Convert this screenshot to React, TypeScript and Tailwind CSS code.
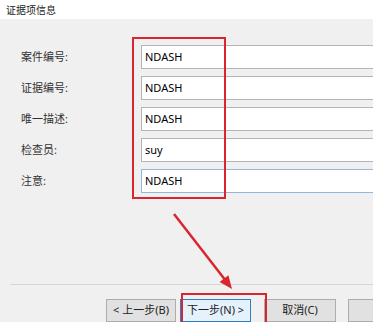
import React from "react";

const fields = [
  { label: "案件编号:", value: "NDASH" },
  { label: "证据编号:", value: "NDASH" },
  { label: "唯一描述:", value: "NDASH" },
  { label: "检查员:", value: "suy" },
  { label: "注意:", value: "NDASH", focused: true },
];

const font = { fontFamily: '"Noto Sans", "Noto Sans CJK SC", sans-serif' };

export default function App() {
  return (
    <div
      className="relative w-[373px] h-[322px] overflow-hidden bg-[#f0f0f0] text-[#1a1a1a]"
      style={font}
    >
      {/* header */}
      <div className="h-[19px] bg-white flex items-center pl-[6px]">
        <span className="text-[10px] leading-none text-[#222]">证据项信息</span>
      </div>

      {/* form rows */}
      <div className="flex flex-col gap-[7px] pt-[26px]">
        {fields.map((f) => (
          <div key={f.label} className="flex items-center h-[24px] w-[400px]">
            <div className="w-[141px] pl-[21px] text-[11px] text-[#333]">{f.label}</div>
            <div
              className={
                "h-[24px] w-[250px] bg-white border flex items-center pl-[3px] text-[11px] text-black " +
                (f.focused ? "border-[#8fb8db]" : "border-[#b4b4b4]")
              }
            >
              {f.value}
            </div>
          </div>
        ))}
      </div>

      {/* separator */}
      <div className="mt-[91px] ml-[10px] h-px bg-[#d6d6d6]" />

      {/* buttons */}
      <div className="flex mt-[14px] pl-[106px] text-[11px] w-[420px]">
        <button className="h-[23px] w-[74px] bg-[#e1e1e1] border border-[#adadad] flex items-center justify-center text-[#222]">
          &lt; 上一步(B)
        </button>
        <button className="ml-[4px] h-[23px] w-[75px] bg-[#e5f1fb] border border-[#2a7fc7] flex items-center justify-center text-[#222]">
          下一步(N) &gt;
        </button>
        <button className="ml-[13px] h-[23px] w-[76px] bg-[#e1e1e1] border border-[#adadad] flex items-center justify-center text-[#222]">
          取消(C)
        </button>
        <button
          aria-label="帮助"
          className="ml-[12px] h-[23px] w-[76px] bg-[#e1e1e1] border border-[#adadad]"
        />
      </div>

      {/* annotations */}
      <div className="absolute left-[132px] top-[37px] w-[94px] h-[162px] border-2 border-[#d9262e]" />
      <div className="absolute left-[181px] top-[293px] w-[86px] h-[40px] border-2 border-[#d9262e]" />
      <svg className="absolute left-0 top-0 pointer-events-none" width="373" height="322">
        <line x1="174" y1="214" x2="226" y2="281" stroke="#d9262e" strokeWidth="2.5" />
        <polygon points="232,289 219.6,282.1 228.4,275.3" fill="#d9262e" />
      </svg>
    </div>
  );
}
